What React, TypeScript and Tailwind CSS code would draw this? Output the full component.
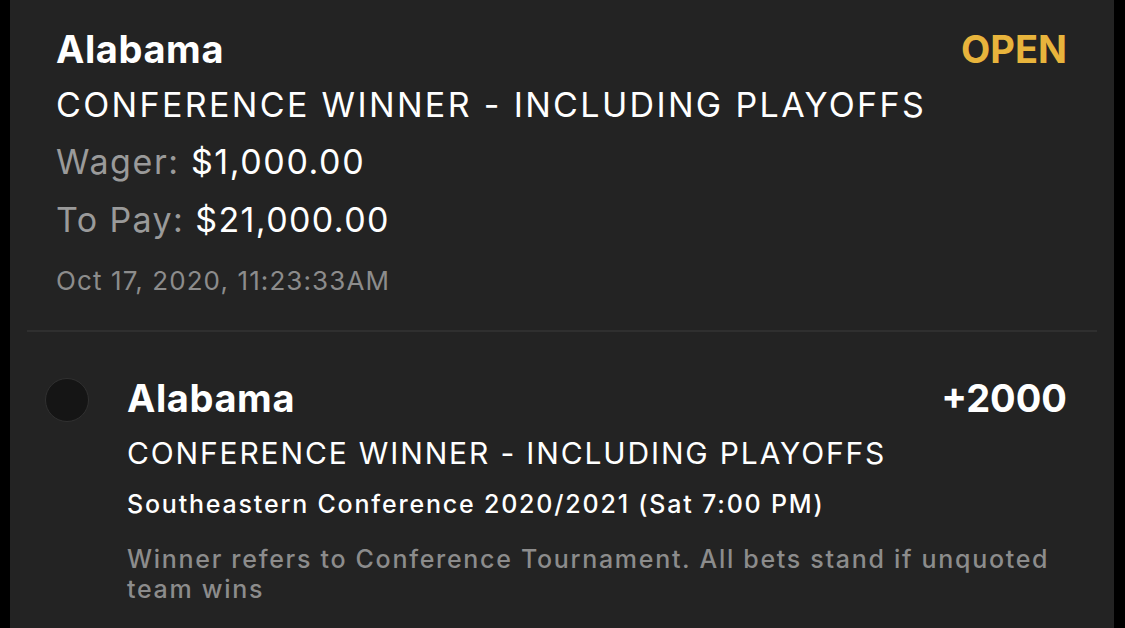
import React from "react";

export default function App() {
  const font = { fontFamily: "Inter, 'Noto Sans', sans-serif" };
  return (
    <div className="w-[1125px] h-[628px] bg-black flex overflow-hidden" style={font}>
      <div className="ml-[10px] w-[1104px] h-full bg-[#232323] flex flex-col">
        {/* top section */}
        <div className="pl-[46px] pr-[47px] pt-[27px] flex flex-col">
          <div className="flex justify-between items-start">
            <div className="text-[38px] leading-[44px] font-bold tracking-[0.6px] text-white">Alabama</div>
            <div className="text-[38px] leading-[44px] font-bold text-[#e8b43c]">OPEN</div>
          </div>
          <div className="mt-[5px] text-[34px] leading-[57px] tracking-[2.35px] text-white">
            CONFERENCE WINNER - INCLUDING PLAYOFFS
          </div>
          <div className="text-[34px] leading-[57px] tracking-[1.6px]">
            <span className="text-[#9a9a9a]">Wager:</span>{" "}
            <span className="text-white">$1,000.00</span>
          </div>
          <div className="mt-[1px] text-[34px] leading-[57px] tracking-[1.4px]">
            <span className="text-[#9a9a9a]">To Pay:</span>{" "}
            <span className="text-white">$21,000.00</span>
          </div>
          <div className="mt-[13px] text-[26px] leading-[40px] tracking-[1.1px] text-[#8c8c8c]">
            Oct 17, 2020, 11:23:33AM
          </div>
        </div>
        <div className="mt-[29px] mx-[17px] h-[2px] bg-[#2f2f2f]" />
        {/* selection */}
        <div className="pt-[44px] pl-[35px] pr-[47px] flex">
          <div className="w-[44px] h-[44px] mt-[2px] rounded-full bg-[#151515] border border-[#303030] shrink-0" />
          <div className="ml-[38px] flex-1 flex flex-col">
            <div className="flex justify-between items-start">
              <div className="text-[38px] leading-[44px] font-bold tracking-[0.6px] text-white">Alabama</div>
              <div className="text-[38px] leading-[44px] font-bold text-white">+2000</div>
            </div>
            <div className="mt-[13px] text-[30px] leading-[40px] tracking-[1.85px] text-white">
              CONFERENCE WINNER - INCLUDING PLAYOFFS
            </div>
            <div className="mt-[13px] text-[25px] leading-[36px] font-medium tracking-[1.8px] text-white">
              Southeastern Conference 2020/2021 (Sat 7:00 PM)
            </div>
            <div className="mt-[22px] text-[25px] leading-[30px] font-medium tracking-[1.7px] text-[#8c8c8c]">
              Winner refers to Conference Tournament. All bets stand if unquoted team wins
            </div>
          </div>
        </div>
      </div>
    </div>
  );
}
